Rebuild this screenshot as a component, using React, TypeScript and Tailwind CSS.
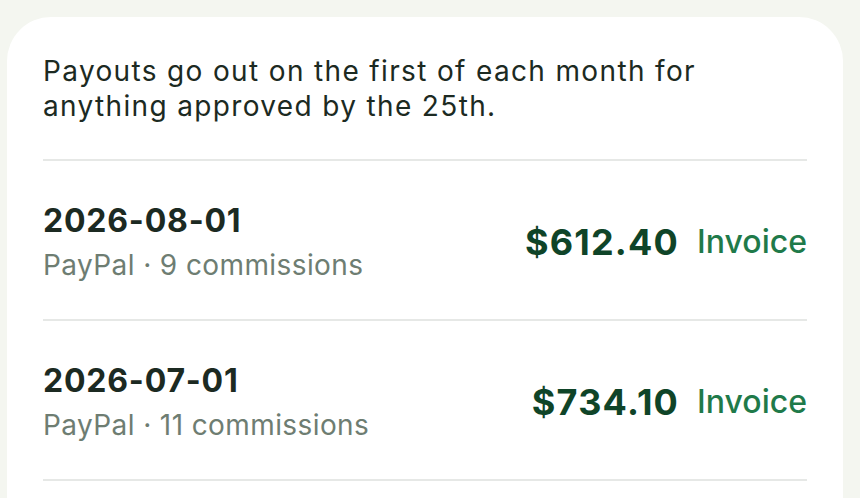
import React from "react";

const rows = [
  { date: "2026-08-01", meta: "PayPal · 9 commissions", amount: "$612.40" },
  { date: "2026-07-01", meta: "PayPal · 11 commissions", amount: "$734.10" },
];

export default function App() {
  return (
    <div
      className="h-[498px] w-[860px] overflow-hidden bg-[#f4f6f0] pt-[17px] pl-[7px] pr-[17px]"
      style={{ fontFamily: "Inter, 'Noto Sans', sans-serif" }}
    >
      <div className="h-[600px] rounded-t-[44px] bg-white px-[36px] pt-[37px]">
        <p className="border-b-2 border-[#e6e8e6] pb-[35px] text-[28px] leading-[35px] tracking-[1.35px] text-[#1c2a22]">
          Payouts go out on the first of each month for anything approved by the 25th.
        </p>
        {rows.map((r) => (
          <div
            key={r.date}
            className="flex items-center justify-between border-b-2 border-[#e6e8e6] pt-[41px] pb-[37px]"
          >
            <div className="flex flex-col gap-[8px]">
              <div className="text-[32px] font-bold leading-[38px] tracking-[0.8px] text-[#1c2a22]">{r.date}</div>
              <div className="text-[28px] leading-[34px] tracking-[0.4px] text-[#6e7d72]">{r.meta}</div>
            </div>
            <div className="flex items-center gap-[18px]">
              <div className="text-[36px] font-bold leading-[40px] tracking-[1.2px] text-[#0f4428]">{r.amount}</div>
              <div className="text-[32px] font-medium leading-[38px] text-[#1f7a4a]">Invoice</div>
            </div>
          </div>
        ))}
      </div>
    </div>
  );
}
